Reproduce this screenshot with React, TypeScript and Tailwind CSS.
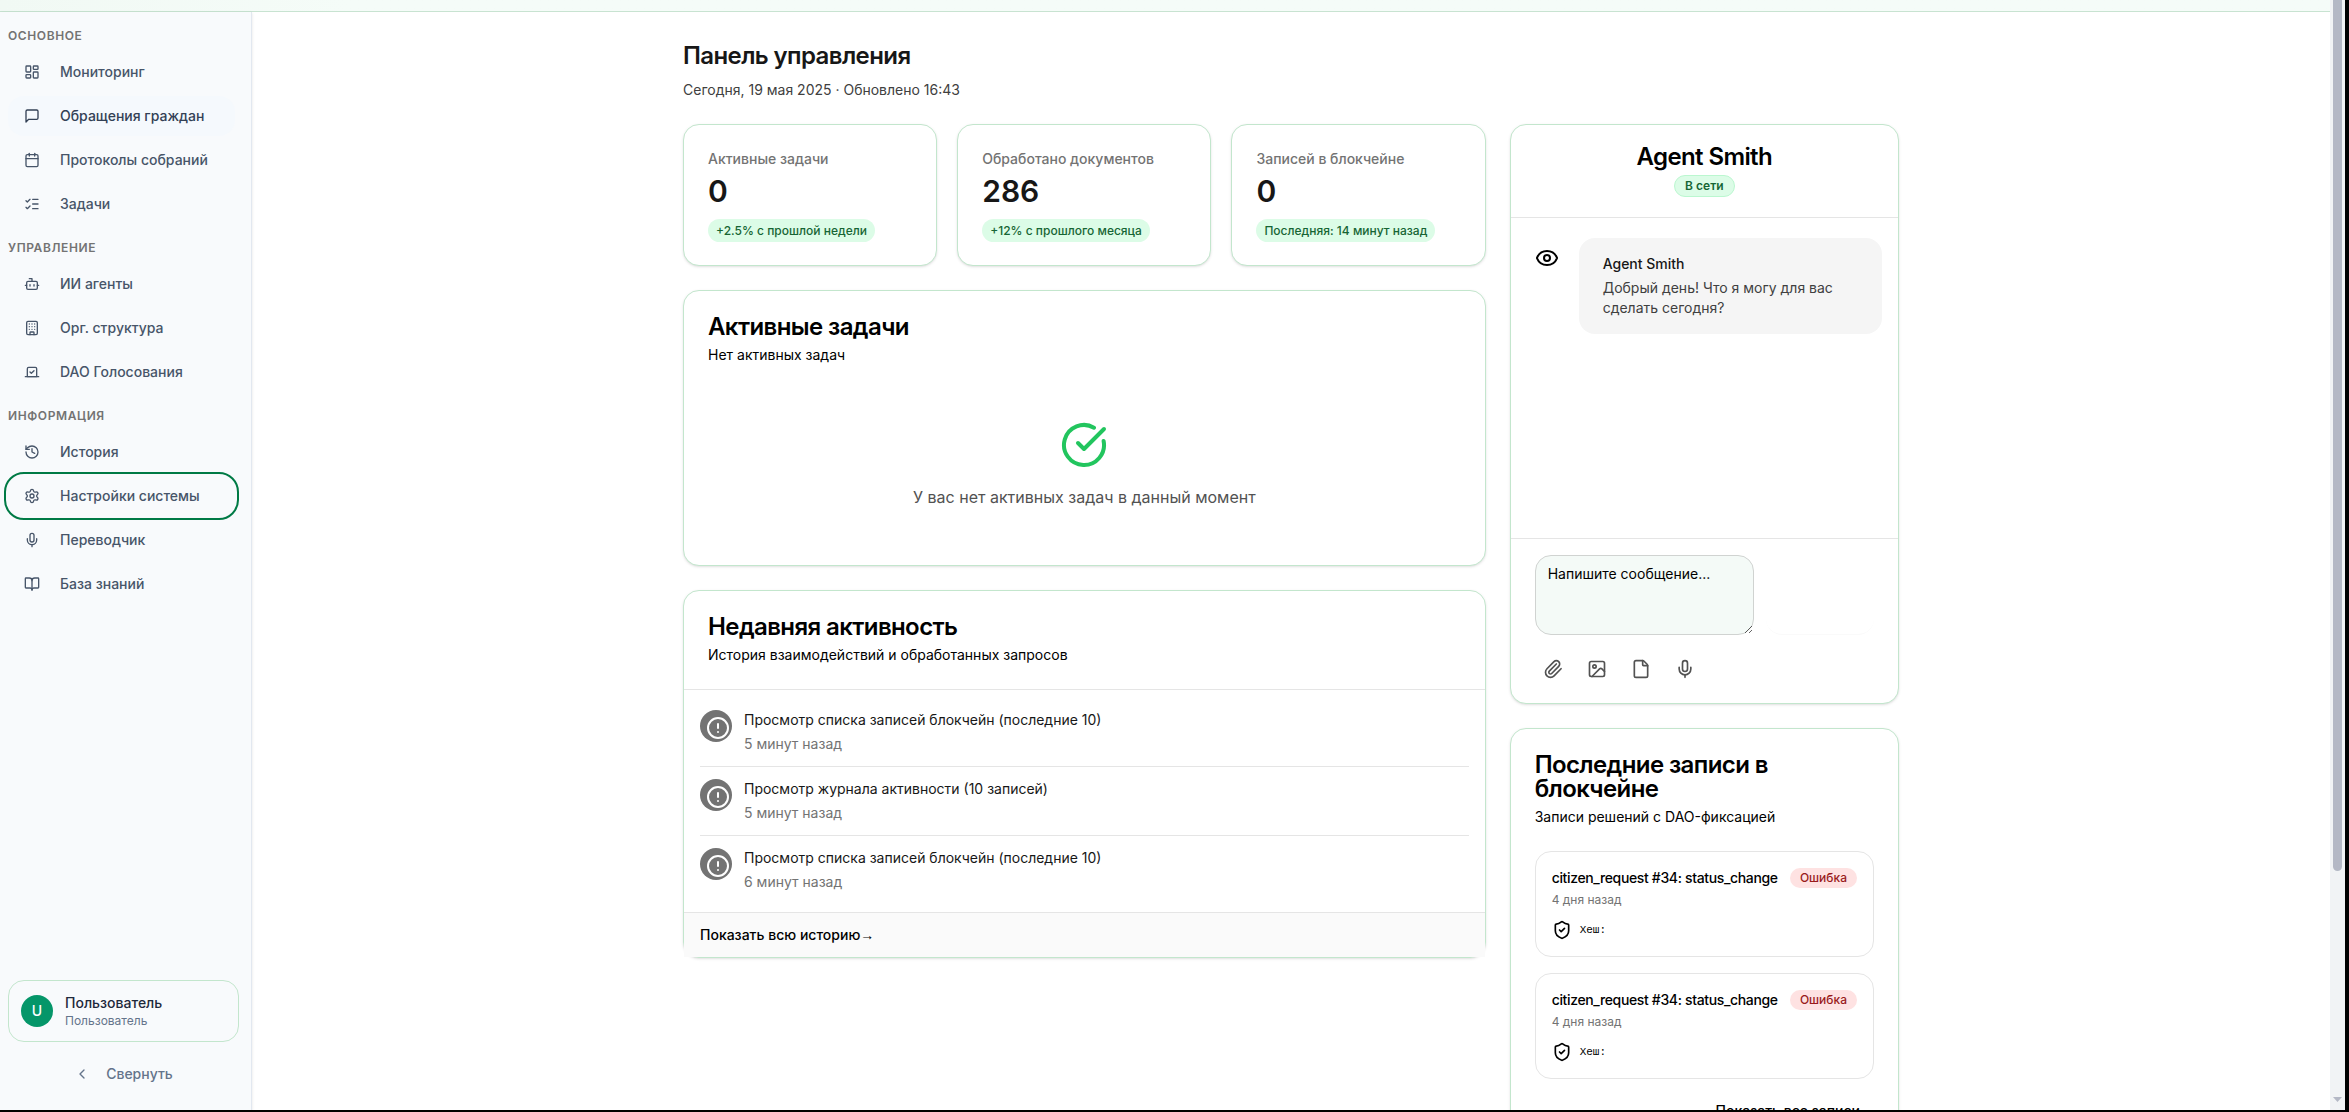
import type { ReactNode } from "react";
import {
  Bot,
  BookOpen,
  Building,
  Calendar,
  ChevronLeft,
  CircleAlert,
  CircleCheckBig,
  Eye,
  File,
  History,
  Image,
  LayoutDashboard,
  ListChecks,
  Mic,
  Paperclip,
  Settings,
  ShieldCheck,
  Vote,
} from "lucide-react";

type IconType = (props: { className?: string }) => ReactNode;

const MessageSquare: IconType = ({ className }) => (
  <svg
    className={className}
    viewBox="0 0 24 24"
    fill="none"
    stroke="currentColor"
    strokeWidth="2"
    strokeLinecap="round"
    strokeLinejoin="round"
  >
    <path d="M21 15a2 2 0 0 1-2 2H7l-4 4V5a2 2 0 0 1 2-2h14a2 2 0 0 1 2 2z" />
  </svg>
);

type NavItem = { label: string; icon: any; state?: "active" | "focused" };

const sections: { title: string; items: NavItem[] }[] = [
  {
    title: "ОСНОВНОЕ",
    items: [
      { label: "Мониторинг", icon: LayoutDashboard },
      { label: "Обращения граждан", icon: MessageSquare, state: "active" },
      { label: "Протоколы собраний", icon: Calendar },
      { label: "Задачи", icon: ListChecks },
    ],
  },
  {
    title: "УПРАВЛЕНИЕ",
    items: [
      { label: "ИИ агенты", icon: Bot },
      { label: "Орг. структура", icon: Building },
      { label: "DAO Голосования", icon: Vote },
    ],
  },
  {
    title: "ИНФОРМАЦИЯ",
    items: [
      { label: "История", icon: History },
      { label: "Настройки системы", icon: Settings, state: "focused" },
      { label: "Переводчик", icon: Mic },
      { label: "База знаний", icon: BookOpen },
    ],
  },
];

const stats = [
  { label: "Активные задачи", value: "0", note: "+2.5% с прошлой недели" },
  { label: "Обработано документов", value: "286", note: "+12% с прошлого месяца" },
  { label: "Записей в блокчейне", value: "0", note: "Последняя: 14 минут назад" },
];

const activity = [
  { text: "Просмотр списка записей блокчейн (последние 10)", time: "5 минут назад" },
  { text: "Просмотр журнала активности (10 записей)", time: "5 минут назад" },
  { text: "Просмотр списка записей блокчейн (последние 10)", time: "6 минут назад" },
];

const records = [
  { id: 1, title: "citizen_request #34: status_change", time: "4 дня назад" },
  { id: 2, title: "citizen_request #34: status_change", time: "4 дня назад" },
];

const attachments = [
  { label: "Прикрепить файл", icon: Paperclip },
  { label: "Изображение", icon: Image },
  { label: "Документ", icon: File },
  { label: "Голосовое сообщение", icon: Mic },
];

const itemStyle = {
  default: "text-[#475569]",
  active: "bg-[#f5f9fd] text-[#334155]",
  focused: "text-[#475569] outline-2 outline-offset-2 outline-[#007a45]",
};

function Card({ children, className = "" }: { children: ReactNode; className?: string }) {
  return (
    <section className={`rounded-2xl border border-[#c3e6cd] bg-white shadow-sm ${className}`}>
      {children}
    </section>
  );
}

function CardHeader({ title, subtitle }: { title: string; subtitle: string }) {
  return (
    <header className="flex flex-col gap-1.5 p-6">
      <h2 className="text-2xl leading-6 font-semibold tracking-tight text-black">{title}</h2>
      <p className="text-sm text-black">{subtitle}</p>
    </header>
  );
}

function Sidebar() {
  return (
    <aside className="z-10 flex w-[252px] shrink-0 flex-col border-r border-[#e2e8f0] bg-[#f8fafc] py-4 pr-3 pl-2 shadow-sm">
      <nav className="flex flex-col gap-4 pr-1">
        {sections.map((section) => (
          <div key={section.title}>
            <h3 className="mb-2 text-xs font-semibold tracking-wider text-[#737373]">{section.title}</h3>
            <ul className="flex flex-col gap-1">
              {section.items.map(({ label, icon: Icon, state }) => (
                <li key={label}>
                  <a
                    href="#"
                    className={`flex h-10 items-center gap-5 rounded-2xl px-4 text-sm font-medium ${itemStyle[state ?? "default"]}`}
                  >
                    <Icon className="size-4 shrink-0" />
                    {label}
                  </a>
                </li>
              ))}
            </ul>
          </div>
        ))}
      </nav>
      <div className="mt-auto flex items-center gap-3 rounded-2xl border border-[#c3e6cd] p-3">
        <div className="flex size-8 items-center justify-center rounded-full bg-[#059669] text-sm font-medium text-white">
          U
        </div>
        <div>
          <p className="text-sm font-medium text-[#1e293b]">Пользователь</p>
          <p className="text-xs text-[#64748b]">Пользователь</p>
        </div>
      </div>
      <button className="mt-3 flex h-10 items-center justify-center gap-4 text-sm font-medium text-[#64748b]">
        <ChevronLeft className="size-4" />
        Свернуть
      </button>
    </aside>
  );
}

function StatCard({ label, value, note }: { label: string; value: string; note: string }) {
  return (
    <Card className="flex flex-col items-start px-6 pt-6 pb-[23px]">
      <p className="text-sm font-medium text-[#737373]">{label}</p>
      <p className="mt-1 text-3xl font-semibold text-[#171717]">{value}</p>
      <span className="mt-2.5 rounded-full bg-[#dcfce7] px-2 py-1 text-xs leading-[15px] font-medium text-[#166534]">
        {note}
      </span>
    </Card>
  );
}

function ActivityCard() {
  return (
    <Card>
      <CardHeader title="Недавняя активность" subtitle="История взаимодействий и обработанных запросов" />
      <ul className="divide-y divide-[#e5e5e5] border-t border-[#e5e5e5] px-4 py-2">
        {activity.map((entry, i) => (
          <li key={i} className="flex gap-3 py-3">
            <span className="size-8 shrink-0 rounded-full bg-[#737373] p-1.5 text-white">
              <CircleAlert className="size-6" />
            </span>
            <div className="flex flex-col gap-1 text-sm">
              <p className="text-[#171717]">{entry.text}</p>
              <p className="text-[#737373]">{entry.time}</p>
            </div>
          </li>
        ))}
      </ul>
      <footer className="flex border-t border-[#e5e5e5] bg-[#fafafa] px-4 py-3">
        <button className="flex text-sm font-medium text-black">
          Показать всю историю<span className="font-['Liberation_Sans',sans-serif]">→</span>
        </button>
      </footer>
    </Card>
  );
}

function ChatCard() {
  return (
    <Card>
      <header className="flex flex-col items-center gap-1.5 border-b border-[#e5e5e5] py-5">
        <h2 className="text-2xl leading-6 font-semibold tracking-tight text-black">Agent Smith</h2>
        <span className="rounded-full border border-[#bbf7d0] bg-[#dcfce7] px-2.5 py-0.5 text-xs font-semibold text-[#166534]">
          В сети
        </span>
      </header>
      <div className="flex h-80 items-start gap-3 px-4 py-5">
        <span className="flex size-10 shrink-0 items-center justify-center text-black">
          <Eye className="size-6" />
        </span>
        <div className="flex-1 rounded-2xl bg-[#f5f5f5] px-6 py-4 text-sm">
          <p className="mb-1 font-medium text-[#171717]">Agent Smith</p>
          <p className="text-[#404040]">Добрый день! Что я могу для вас сделать сегодня?</p>
        </div>
      </div>
      <footer className="flex flex-col gap-4 border-t border-[#e5e5e5] px-6 py-4">
        <div className="flex gap-3">
          <textarea
            aria-label="Сообщение"
            placeholder="Напишите сообщение..."
            className="h-20 w-[219px] rounded-2xl border border-[#d0d3d1] bg-[#f4faf7] px-3 py-2 text-sm text-black placeholder:text-black"
          />
          <button
            aria-label="Отправить"
            className="h-20 flex-1 rounded-2xl border-b border-[#fafafa]"
          />
        </div>
        <div className="flex gap-2">
          {attachments.map(({ label, icon: Icon }) => (
            <button key={label} aria-label={label} className="flex size-9 items-center justify-center text-[#525252]">
              <Icon className="size-5" />
            </button>
          ))}
        </div>
      </footer>
    </Card>
  );
}

function RecordsCard() {
  return (
    <Card>
      <CardHeader title="Последние записи в блокчейне" subtitle="Записи решений с DAO-фиксацией" />
      <ul className="flex flex-col gap-4 px-6">
        {records.map((record) => (
          <li key={record.id} className="rounded-2xl border border-[#e5e5e5] p-4">
            <div className="flex items-center justify-between">
              <p className="text-sm font-medium tracking-tight text-black">{record.title}</p>
              <span className="rounded-full bg-[#fee2e2] px-2.5 py-0.5 text-xs font-medium text-[#991b1b]">Ошибка</span>
            </div>
            <p className="mt-1 text-xs text-[#737373]">{record.time}</p>
            <div className="mt-3 flex items-center gap-2 text-black">
              <ShieldCheck className="size-5" />
              <span className="font-['Liberation_Mono',monospace] text-[11px] leading-4">Хеш:</span>
            </div>
          </li>
        ))}
      </ul>
      <footer className="flex justify-end px-6 pt-[22px] pb-6">
        <a href="#" className="px-3.5 text-sm font-medium text-black">
          Показать все записи
        </a>
      </footer>
    </Card>
  );
}

function Scrollbar() {
  return (
    <div aria-hidden className="flex w-[15px] shrink-0 flex-col items-center bg-[#f1f3f5] pb-2">
      <div className="h-[79%] w-[9px] rounded-b-full bg-[#b4b8c5]" />
      <svg className="mt-auto h-[5px] w-[9px]" viewBox="0 0 9 5">
        <path d="M0 0h9L4.500 5z" fill="#b4b8c5" />
      </svg>
    </div>
  );
}

export default function App() {
  return (
    <div className="flex h-screen overflow-hidden bg-black pr-1 pb-0.5 font-['Inter',sans-serif]">
      <div className="flex min-w-0 flex-1 flex-col bg-white">
        <div className="h-3 shrink-0 border-b border-[#c8e3d1] bg-linear-to-r from-[#f1f9f4] to-[#f5fcf8] to-15%" />
        <div className="flex min-h-0 flex-1">
          <Sidebar />
          <main className="min-w-0 flex-1 overflow-hidden">
            <div className="mx-auto max-w-7xl px-8 pt-7">
              <h1 className="text-2xl font-semibold tracking-tight text-[#171717]">Панель управления</h1>
              <p className="mt-2 mb-6 text-sm text-[#404040]">Сегодня, 19 мая 2025 · Обновлено 16:43</p>
              <div className="grid grid-cols-3 items-start gap-6">
                <div className="col-span-2 flex flex-col gap-6">
                  <div className="grid grid-cols-3 gap-5">
                    {stats.map((stat) => (
                      <StatCard key={stat.label} {...stat} />
                    ))}
                  </div>
                  <Card>
                    <CardHeader title="Активные задачи" subtitle="Нет активных задач" />
                    <div className="flex flex-col items-center gap-4 px-6 pt-8 pb-14">
                      <CircleCheckBig className="size-12 text-[#22c55e]" />
                      <p className="text-base text-[#525252]">У вас нет активных задач в данный момент</p>
                    </div>
                  </Card>
                  <ActivityCard />
                </div>
                <div className="flex flex-col gap-6">
                  <ChatCard />
                  <RecordsCard />
                </div>
              </div>
            </div>
          </main>
        </div>
      </div>
      <Scrollbar />
    </div>
  );
}
